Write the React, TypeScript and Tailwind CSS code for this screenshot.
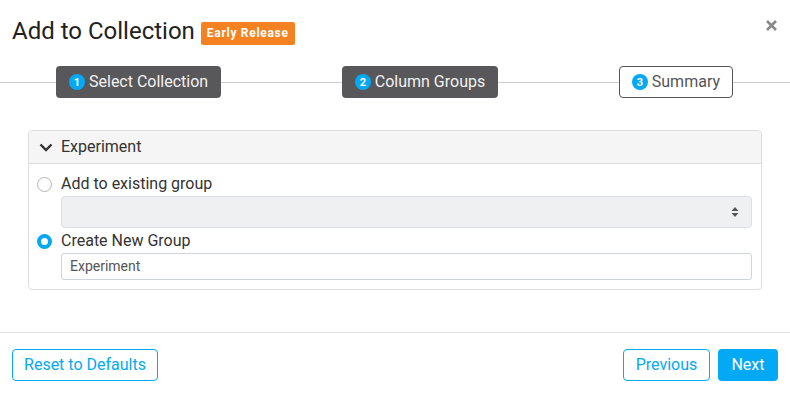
import React from "react";

const StepBadge = ({ n }: { n: number }) => (
    <span className="w-4 h-4 rounded-full bg-[#03a9f4] text-white text-[11px] font-bold leading-none flex items-center justify-center">
        {n}
    </span>
);

const Radio = ({ checked }: { checked?: boolean }) =>
    checked ? (
        <span className="w-[15px] h-[15px] rounded-full border-[4.5px] border-[#03a9f4] bg-white shrink-0" />
    ) : (
        <span className="w-[15px] h-[15px] rounded-full border border-[#b5b5b5] bg-white shrink-0" />
    );

export default function App() {
    return (
        <div
            className="w-[790px] h-[394px] bg-white text-[#333] overflow-hidden"
            style={{ fontFamily: "Roboto, 'Liberation Sans', sans-serif" }}
        >
            {/* Header */}
            <div className="flex justify-between pl-3 pr-[13px] pt-4">
                <div className="flex items-center gap-[6px] h-[31px]">
                    <h2 className="text-[24px] leading-[31px] text-[#222]">Add to Collection</h2>
                    <span className="mt-[3px] h-[23px] px-[6px] rounded-[2px] bg-[#f58220] text-white text-[12px] font-bold tracking-[0.7px] flex items-center">
                        Early Release
                    </span>
                </div>
                <button className="mt-1 h-[11px] w-[11px] flex items-center justify-center text-[#888]" aria-label="Close">
                    <svg width="11" height="11" viewBox="0 0 11 11">
                        <path d="M1 1L10 10M10 1L1 10" stroke="currentColor" strokeWidth="2.6" />
                    </svg>
                </button>
            </div>

            {/* Steps */}
            <div className="mt-[19px] flex items-center h-8">
                <div className="w-14 h-px bg-[#cfcfcf]" />
                <div className="h-8 px-[13px] rounded-[4px] bg-[#58585a] text-[#f2f2f2] text-[16px] flex items-center gap-1">
                    <StepBadge n={1} />
                    <span>Select Collection</span>
                </div>
                <div className="flex-1 h-px bg-[#cfcfcf]" />
                <div className="h-8 px-[13px] rounded-[4px] bg-[#58585a] text-[#f2f2f2] text-[16px] flex items-center gap-1">
                    <StepBadge n={2} />
                    <span>Column Groups</span>
                </div>
                <div className="flex-1 h-px bg-[#cfcfcf]" />
                <div className="h-8 px-3 rounded-[4px] bg-white border border-[#555] text-[#555] text-[16px] flex items-center gap-1">
                    <StepBadge n={3} />
                    <span>Summary</span>
                </div>
                <div className="w-[57px] h-px bg-[#cfcfcf]" />
            </div>

            {/* Panel */}
            <div className="mx-[28px] mt-8 border border-[#dedede] rounded-[4px]">
                <div className="h-[33px] bg-[#f5f5f5] border-b border-[#dedede] flex items-center pl-[10px] gap-2 rounded-t-[4px]">
                    <svg width="14" height="9" viewBox="0 0 14 9" className="text-[#333]">
                        <path d="M1.5 1.5L7 7L12.5 1.5" fill="none" stroke="currentColor" strokeWidth="2.4" />
                    </svg>
                    <span className="text-[16px] text-[#333]">Experiment</span>
                </div>
                <div className="pl-2 pr-[9px] pt-[9px] pb-[9px]">
                    <label className="h-[22px] flex items-center gap-[9px]">
                        <Radio />
                        <span className="text-[16px] text-[#333]">Add to existing group</span>
                    </label>
                    <div className="ml-[24px] mt-px h-8 bg-[#eef0f2] border border-[#dcdfe3] rounded-[4px] flex items-center justify-end pr-[12px]">
                        <svg width="8" height="12" viewBox="0 0 8 12" className="text-[#555]">
                            <path d="M4 1L7.5 5H0.5Z M4 11L0.5 7H7.5Z" fill="currentColor" />
                        </svg>
                    </div>
                    <label className="mt-[2px] h-[22px] flex items-center gap-[9px]">
                        <Radio checked />
                        <span className="text-[16px] text-[#333]">Create New Group</span>
                    </label>
                    <div className="ml-[24px] mt-px h-[27px] border border-[#ced4da] rounded-[3px] flex items-center pl-2 text-[14px] text-[#555]">
                        Experiment
                    </div>
                </div>
            </div>

            {/* Footer */}
            <div className="mt-[42px] border-t border-[#e0e0e0] px-3 pt-4 flex justify-between">
                <button className="h-8 w-[146px] rounded-[4px] border border-[#03a9f4] text-[#03a9f4] text-[16px] bg-white">
                    Reset to Defaults
                </button>
                <div className="flex gap-2">
                    <button className="h-8 w-[87px] rounded-[4px] border border-[#03a9f4] text-[#03a9f4] text-[16px] bg-white">
                        Previous
                    </button>
                    <button className="h-8 w-[60px] rounded-[4px] text-white text-[16px] bg-[#03a9f4]">
                        Next
                    </button>
                </div>
            </div>
        </div>
    );
}
